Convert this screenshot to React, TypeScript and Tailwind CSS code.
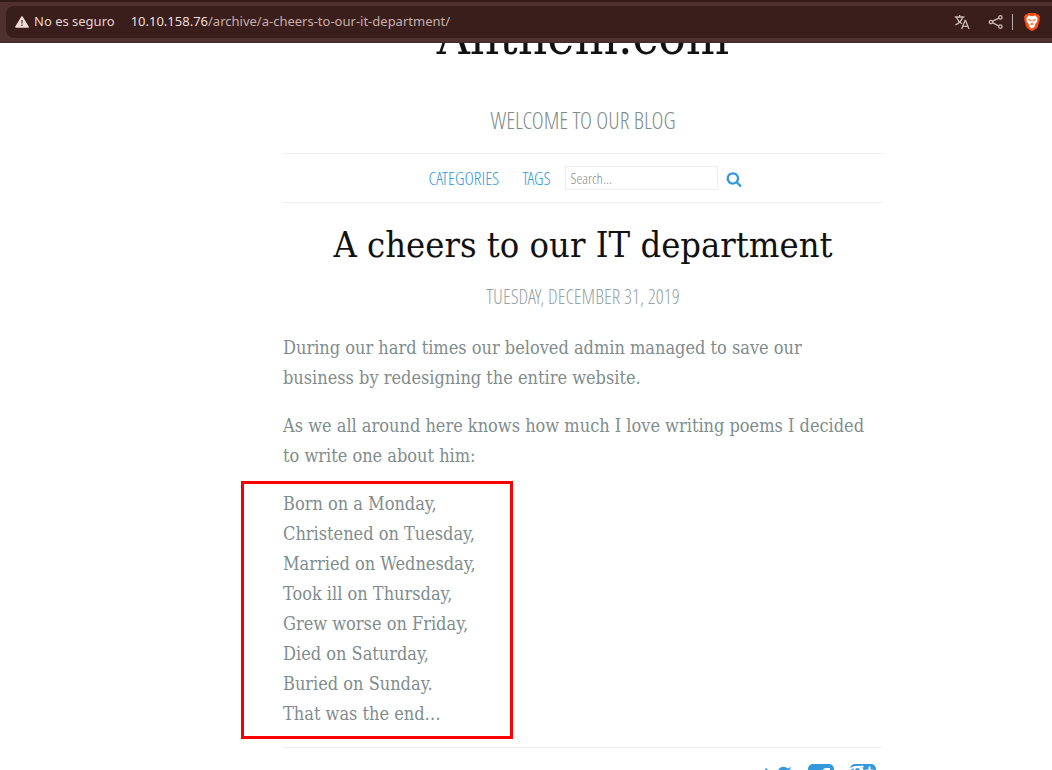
import { FaTwitter } from "react-icons/fa";

const poem = [
  "Born on a Monday,",
  "Christened on Tuesday,",
  "Married on Wednesday,",
  "Took ill on Thursday,",
  "Grew worse on Friday,",
  "Died on Saturday,",
  "Buried on Sunday.",
  "That was the end…",
];

function WarningIcon() {
  return (
    <svg viewBox="0 0 14 12" className="h-3 w-3.5" aria-hidden="true">
      <path d="M7 1 13 11H1Z" fill="#f2dcda" stroke="#f2dcda" strokeWidth="1.6" strokeLinejoin="round" />
      <path d="M7 4v3.4M7 8.6v1.4" stroke="#4a2a27" strokeWidth="1.2" />
    </svg>
  );
}

function TranslateIcon() {
  return (
    <svg viewBox="0 0 16 16" className="size-4" fill="none" stroke="#cdb9b6" strokeWidth="1.3" aria-hidden="true">
      <path d="M.8 3h9.6M5.6 1v2M8.6 3C7.8 6.4 5.2 9 1.4 11M2.6 3.4C3.8 6.6 6 8.6 8 9.8" />
      <path d="m7.6 15 3.5-8.6h.4L15 15M8.8 12.3h5" />
    </svg>
  );
}

function ShareIcon() {
  return (
    <svg viewBox="0 0 16 16" className="size-4" fill="none" stroke="#cdb9b6" strokeWidth="1.3" aria-hidden="true">
      <circle cx="3" cy="8" r="1.7" />
      <circle cx="12.4" cy="3.4" r="1.7" />
      <circle cx="12.4" cy="12.6" r="1.7" />
      <path d="m4.8 7.1 5.9-2.9M4.8 8.9l5.9 2.9" />
    </svg>
  );
}

function BraveIcon() {
  return (
    <svg viewBox="0 0 16 18" className="h-[18px] w-4" aria-hidden="true">
      <path d="M4.4 0h7.2L13 1.5l1.4-.1L16 3.6l-.5 1.6.4 1-2 7.4c-.3.9-.7 1.4-1.4 1.9L8.8 17.8a1.4 1.4 0 0 1-1.6 0l-3.7-2.3c-.7-.5-1.1-1-1.4-1.9l-2-7.4.4-1L0 3.6l1.6-2.2 1.4.1Z" fill="#fb4f14" />
      <path d="m4.6 2.6 3.4.6 3.4-.6 2.3 3-.6 1.8.2 1-2 2.6-.5 1.6-.6 1.6L8 15.600l-2.200-1.400-.6-1.600-.5-1.600-2-2.600.2-1-.6-1.800Z" fill="#fff" />
      <path d="m4.4 6.4 2.4.5-.5 1.1Zm7.2 0-2.4.5.5 1.1ZM8 6.500v3M6.600 11 8 10.200l1.400.8L8 12Z" fill="#fb4f14" stroke="#fb4f14" strokeWidth=".5" />
    </svg>
  );
}

function SearchIcon() {
  return (
    <svg viewBox="0 0 1792 1792" className="size-4" fill="currentColor" aria-hidden="true">
      <path d="M1216 832q0-185-131.5-316.5t-316.5-131.5-316.5 131.5-131.5 316.5 131.5 316.5 316.5 131.5 316.5-131.5 131.5-316.5zm512 832q0 52-38 90t-90 38q-54 0-90-38l-343-342q-179 124-399 124-143 0-273.5-55.5t-225-150-150-225-55.5-273.5 55.5-273.5 150-225 225-150 273.5-55.5 273.5 55.5 225 150 150 225 55.5 273.5q0 220-124 399l343 343q37 37 37 90z" />
    </svg>
  );
}

function FacebookIcon() {
  return (
    <svg viewBox="128 128 1536 1536" className="size-[26px]" fill="currentColor" aria-hidden="true">
      <path d="M1376 128q119 0 203.5 84.5t84.5 203.5v960q0 119-84.5 203.5t-203.5 84.5h-188v-595h199l30-232h-229v-148q0-56 23.5-84t91.5-28l122-1v-207q-63-9-178-9-136 0-217.5 80t-81.5 226v171h-200v232h200v595h-532q-119 0-203.5-84.5t-84.5-203.5v-960q0-119 84.5-203.5t203.5-84.5h960z" />
    </svg>
  );
}

function GooglePlusIcon() {
  return (
    <svg viewBox="0 0 26 26" className="size-[26px]" aria-hidden="true">
      <rect width="26" height="26" rx="5" fill="#3498db" />
      <g fill="none" stroke="#fff" strokeWidth="1.8">
        <path d="M0 5.5C2.5 2.5 6 2.7 13.5 2.7" />
        <ellipse cx="7.5" cy="7.8" rx="3.6" ry="4.6" />
        <path d="M11 3.5c3 3 2 6.5 0 8s-2 2.5 0 4 4 6-1 8-10 0-10-3 4-5 9-5" />
        <path d="M19.5 2.5v8M15.5 6.5h8" />
      </g>
    </svg>
  );
}

function AddressBar() {
  return (
    <header className="relative z-10 shrink-0 border-t-2 border-b border-t-[#331917] border-b-[#3d2a2b] bg-[#4f3230] py-1 pl-1.5 font-['Noto_Sans',sans-serif] text-[13px]">
      <div className="flex h-8 items-center rounded-l-lg bg-[#391e1b] pr-3 pl-[9px]">
        <button type="button" className="flex items-center gap-[5px] text-[#e8d3d0]">
          <WarningIcon />
          No es seguro
        </button>
        <div className="ml-4 flex-1 text-[#c6aeab]">
          <span className="text-[#f0dedc]">10.10.158.76</span>/archive/a-cheers-to-our-it-department/
        </div>
        <div className="flex items-center">
          <button type="button" aria-label="Translate"><TranslateIcon /></button>
          <button type="button" aria-label="Share" className="ml-[18px]"><ShareIcon /></button>
          <span className="mx-2 h-4 w-px bg-[#b9a9ae]" />
          <button type="button" aria-label="Brave Shields" className="ml-[3px]"><BraveIcon /></button>
        </div>
      </div>
    </header>
  );
}

export default function App() {
  return (
    <div className="flex h-screen flex-col overflow-hidden bg-white">
      <AddressBar />
      <main className="min-h-0 flex-1 overflow-hidden pl-[114px] font-['DejaVu_Serif_Condensed','DejaVu_Serif',serif] text-[#7f8c8d]">
        <div className="mx-auto max-w-[600px]">
          <div className="-mt-9 text-center">
            <h1 className="text-[51px] leading-[60px] text-[#111]">Anthem.com</h1>
            <p className="mt-9 pb-4 font-['Open_Sans_Condensed_Light','Liberation_Sans_Narrow',sans-serif] text-[23px] leading-[34px] font-light uppercase">
              Welcome to our blog
            </p>
          </div>
          <nav className="flex h-[50px] items-center justify-center border-y border-[#eee] pl-1 font-['Open_Sans_Condensed_Light','Liberation_Sans_Narrow',sans-serif] text-lg font-light text-[#3498db]">
            <a href="#categories" className="uppercase">Categories</a>
            <a href="#tags" className="ml-[23px] uppercase">Tags</a>
            <input
              type="text"
              aria-label="Search"
              placeholder="Search..."
              className="ml-[14px] h-6 w-[153px] border border-[#eee] px-[5px] text-[15px] text-[#7f8c8d] outline-none placeholder:text-[#8b8b8b]"
            />
            <button type="button" aria-label="Submit search" className="ml-2 pt-0.5">
              <SearchIcon />
            </button>
          </nav>
          <article>
            <h2 className="pt-5 text-center text-[36px] leading-[44px] text-[#111]">A cheers to our IT department</h2>
            <p className="mt-[14px] mb-5 text-center font-['Open_Sans_Condensed_Light','Liberation_Sans_Narrow',sans-serif] text-xl leading-8 font-light text-[#95a5a6] uppercase">
              Tuesday, December 31, 2019
            </p>
            <div className="flex flex-col gap-[18px] text-lg leading-[30px]">
              <p>
                During our hard times our beloved admin managed to save our
                <br />
                business by redesigning the entire website.
              </p>
              <p>As we all around here knows how much I love writing poems I decided to write one about him:</p>
              <div className="relative">
                <div className="pointer-events-none absolute -top-2 -bottom-2.5 -left-[42px] w-[272px] border-3 border-[#fb0000]" />
                {poem.map((line) => (
                  <p key={line}>{line}</p>
                ))}
              </div>
            </div>
          </article>
          <footer className="mt-[18px] flex justify-end gap-4 border-t border-[#eee] pt-4 pr-[7px] text-[#3498db]">
            <a href="#twitter" aria-label="Twitter"><FaTwitter className="size-7" /></a>
            <a href="#facebook" aria-label="Facebook"><FacebookIcon /></a>
            <a href="#google" aria-label="Google Plus"><GooglePlusIcon /></a>
          </footer>
        </div>
      </main>
    </div>
  );
}
